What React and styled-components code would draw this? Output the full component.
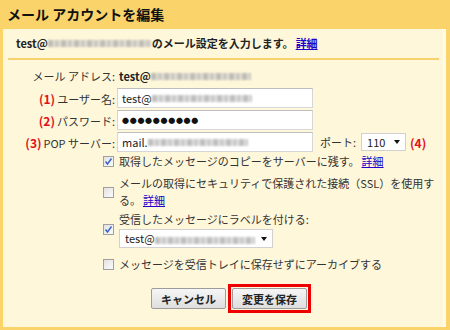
import styled, { createGlobalStyle } from "styled-components";

const Global = createGlobalStyle`
  body {
    margin: 0;
    background: #fad46b;
    font-family: "Noto Sans CJK JP", "Liberation Sans", sans-serif;
    color: #222;
  }
`;

const Frame = styled.div`
  width: 450px;
  height: 330px;
  box-sizing: border-box;
  padding: 0 4px 3px 3px;
  display: flex;
  flex-direction: column;
  background: #fad46b;
`;

const Title = styled.h1`
  margin: 0;
  height: 29px;
  line-height: 29px;
  padding-left: 4px;
  font-size: 14px;
  font-weight: bold;
  color: #111;
`;

const Panel = styled.div`
  flex: 1;
  background: #fff7da;
  border-right: 3px solid #fffbe8;
  padding: 0 4px 0 0;
`;

const Intro = styled.div`
  height: 29px;
  line-height: 29px;
  margin-left: 5px;
  padding-left: 8px;
  font-size: 11px;
  font-weight: bold;
  border-bottom: 2px solid #f6d36f;
  display: flex;
  align-items: center;
`;

const Link = styled.a`
  color: #2200cc;
  text-decoration: underline;
  font-weight: ${(p) => (p.$bold ? "bold" : "normal")};
  margin-left: 2px;
  cursor: pointer;
`;

const Blur = styled.span`
  display: inline-block;
  width: ${(p) => p.$w}px;
  height: 7px;
  background: repeating-linear-gradient(
    90deg,
    #a4a4a4 0 5px,
    #d4d4d4 5px 7px,
    #b4b4b4 7px 11px,
    #dcdcdc 11px 13px
  );
  filter: blur(1.2px);
  opacity: 0.7;
  vertical-align: middle;
`;

const Form = styled.div`
  padding-top: 7px;
  font-size: 11px;
`;

const Row = styled.div`
  display: flex;
  align-items: center;
  height: ${(p) => p.$h || 20}px;
  margin-top: ${(p) => p.$mt || 0}px;
`;

const Label = styled.label`
  width: 112px;
  text-align: right;
  color: #333;
  white-space: nowrap;
`;

const Num = styled.span`
  color: #e0101a;
  font-weight: bold;
  font-size: 12px;
  margin-right: 2px;
  margin-left: ${(p) => p.$ml || 0}px;
`;

const Value = styled.span`
  margin-left: 4px;
  font-weight: bold;
  display: flex;
  align-items: center;
`;

const Input = styled.div`
  margin-left: 2px;
  width: ${(p) => p.$w || 196}px;
  height: 20px;
  box-sizing: border-box;
  background: #fff;
  border: 1px solid #d6d6d6;
  border-top-color: #bdbdbd;
  display: flex;
  align-items: center;
  padding-left: 4px;
  font-size: 11px;
  color: #222;
`;

const Dots = styled.span`
  font-size: 7px;
  letter-spacing: 0.7px;
  color: #111;
`;

const PortLabel = styled.span`
  margin-left: 7px;
  color: #333;
`;

const Select = styled.div`
  width: ${(p) => p.$w}px;
  height: ${(p) => p.$h || 18}px;
  margin-left: ${(p) => p.$ml || 0}px;
  box-sizing: border-box;
  background: #fff;
  border: 1px solid #d0d0d0;
  display: flex;
  align-items: center;
  justify-content: space-between;
  padding: 0 5px 0 5px;
  font-size: 11px;
  color: #222;
  &::after {
    content: "";
    border-left: 3.5px solid transparent;
    border-right: 3.5px solid transparent;
    border-top: 4px solid #111;
  }
`;

const Options = styled.div`
  margin-left: 100px;
  font-size: 11px;
  color: #333;
`;

const Option = styled.div`
  display: flex;
  align-items: center;
  gap: 5px;
  margin-top: ${(p) => p.$mt || 0}px;
  line-height: 17px;
`;

const Box = styled.span`
  flex: none;
  width: 11px;
  height: 11px;
  box-sizing: border-box;
  border: 1px solid #a0a0a0;
  background: linear-gradient(135deg, #e2e2e2, #fbfbfb);
  display: flex;
  align-items: center;
  justify-content: center;
`;

const Stack = styled.div`
  display: flex;
  flex-direction: column;
  gap: 1px;
`;

const Buttons = styled.div`
  display: flex;
  align-items: center;
  margin: 11px 0 0 148px;
  gap: 2px;
`;

const Button = styled.button`
  height: 21px;
  padding: 0 9px;
  font-family: inherit;
  font-size: 11px;
  font-weight: bold;
  color: #222;
  border: 1px solid #9c9c9c;
  border-radius: 2px;
  background: linear-gradient(#f6f6f6, #dedede);
`;

const Highlight = styled.span`
  border: 3px solid #ee0000;
  padding: 1px;
  display: flex;
`;

function Check({ checked }) {
  return (
    <Box>
      {checked && (
        <svg width="9" height="9" viewBox="0 0 9 9">
          <path d="M1.5 4.5 L3.5 7 L7.5 1.5" fill="none" stroke="#3a5fc8" strokeWidth="1.4" />
        </svg>
      )}
    </Box>
  );
}

export default function App() {
  return (
    <>
      <Global />
      <Frame>
        <Title>メール アカウントを編集</Title>
        <Panel>
          <Intro>
            test@<Blur $w={104} />
            のメール設定を入力します。<Link $bold>詳細</Link>
          </Intro>
          <Form>
            <Row $h={18}>
              <Label>メール アドレス:</Label>
              <Value>
                test@<Blur $w={100} />
              </Value>
            </Row>
            <Row $mt={3}>
              <Label>
                <Num>(1)</Num>ユーザー名:
              </Label>
              <Input>
                test@<Blur $w={100} />
              </Input>
            </Row>
            <Row $mt={2}>
              <Label>
                <Num>(2)</Num>パスワード:
              </Label>
              <Input>
                <Dots>●●●●●●●●●●</Dots>
              </Input>
            </Row>
            <Row $mt={2}>
              <Label>
                <Num>(3)</Num>POP サーバー:
              </Label>
              <Input>
                mail.<Blur $w={100} />
              </Input>
              <PortLabel>ポート:</PortLabel>
              <Select $w={45} $ml={5}>110</Select>
              <Num $ml={4}>(4)</Num>
            </Row>
            <Options>
              <Option $mt={1}>
                <Check checked />
                <span>
                  取得したメッセージのコピーをサーバーに残す。<Link>詳細</Link>
                </span>
              </Option>
              <Option $mt={5}>
                <Check />
                <span>
                  メールの取得にセキュリティで保護された接続（SSL）を使用す
                  <br />
                  る。<Link>詳細</Link>
                </span>
              </Option>
              <Option $mt={2}>
                <Check checked />
                <Stack>
                  <span>受信したメッセージにラベルを付ける:</span>
                  <Select $w={154} $h={19}>
                    <span>
                      test@<Blur $w={100} />
                    </span>
                  </Select>
                </Stack>
              </Option>
              <Option $mt={8}>
                <Check />
                <span>メッセージを受信トレイに保存せずにアーカイブする</span>
              </Option>
            </Options>
            <Buttons>
              <Button>キャンセル</Button>
              <Highlight>
                <Button>変更を保存</Button>
              </Highlight>
            </Buttons>
          </Form>
        </Panel>
      </Frame>
    </>
  );
}
